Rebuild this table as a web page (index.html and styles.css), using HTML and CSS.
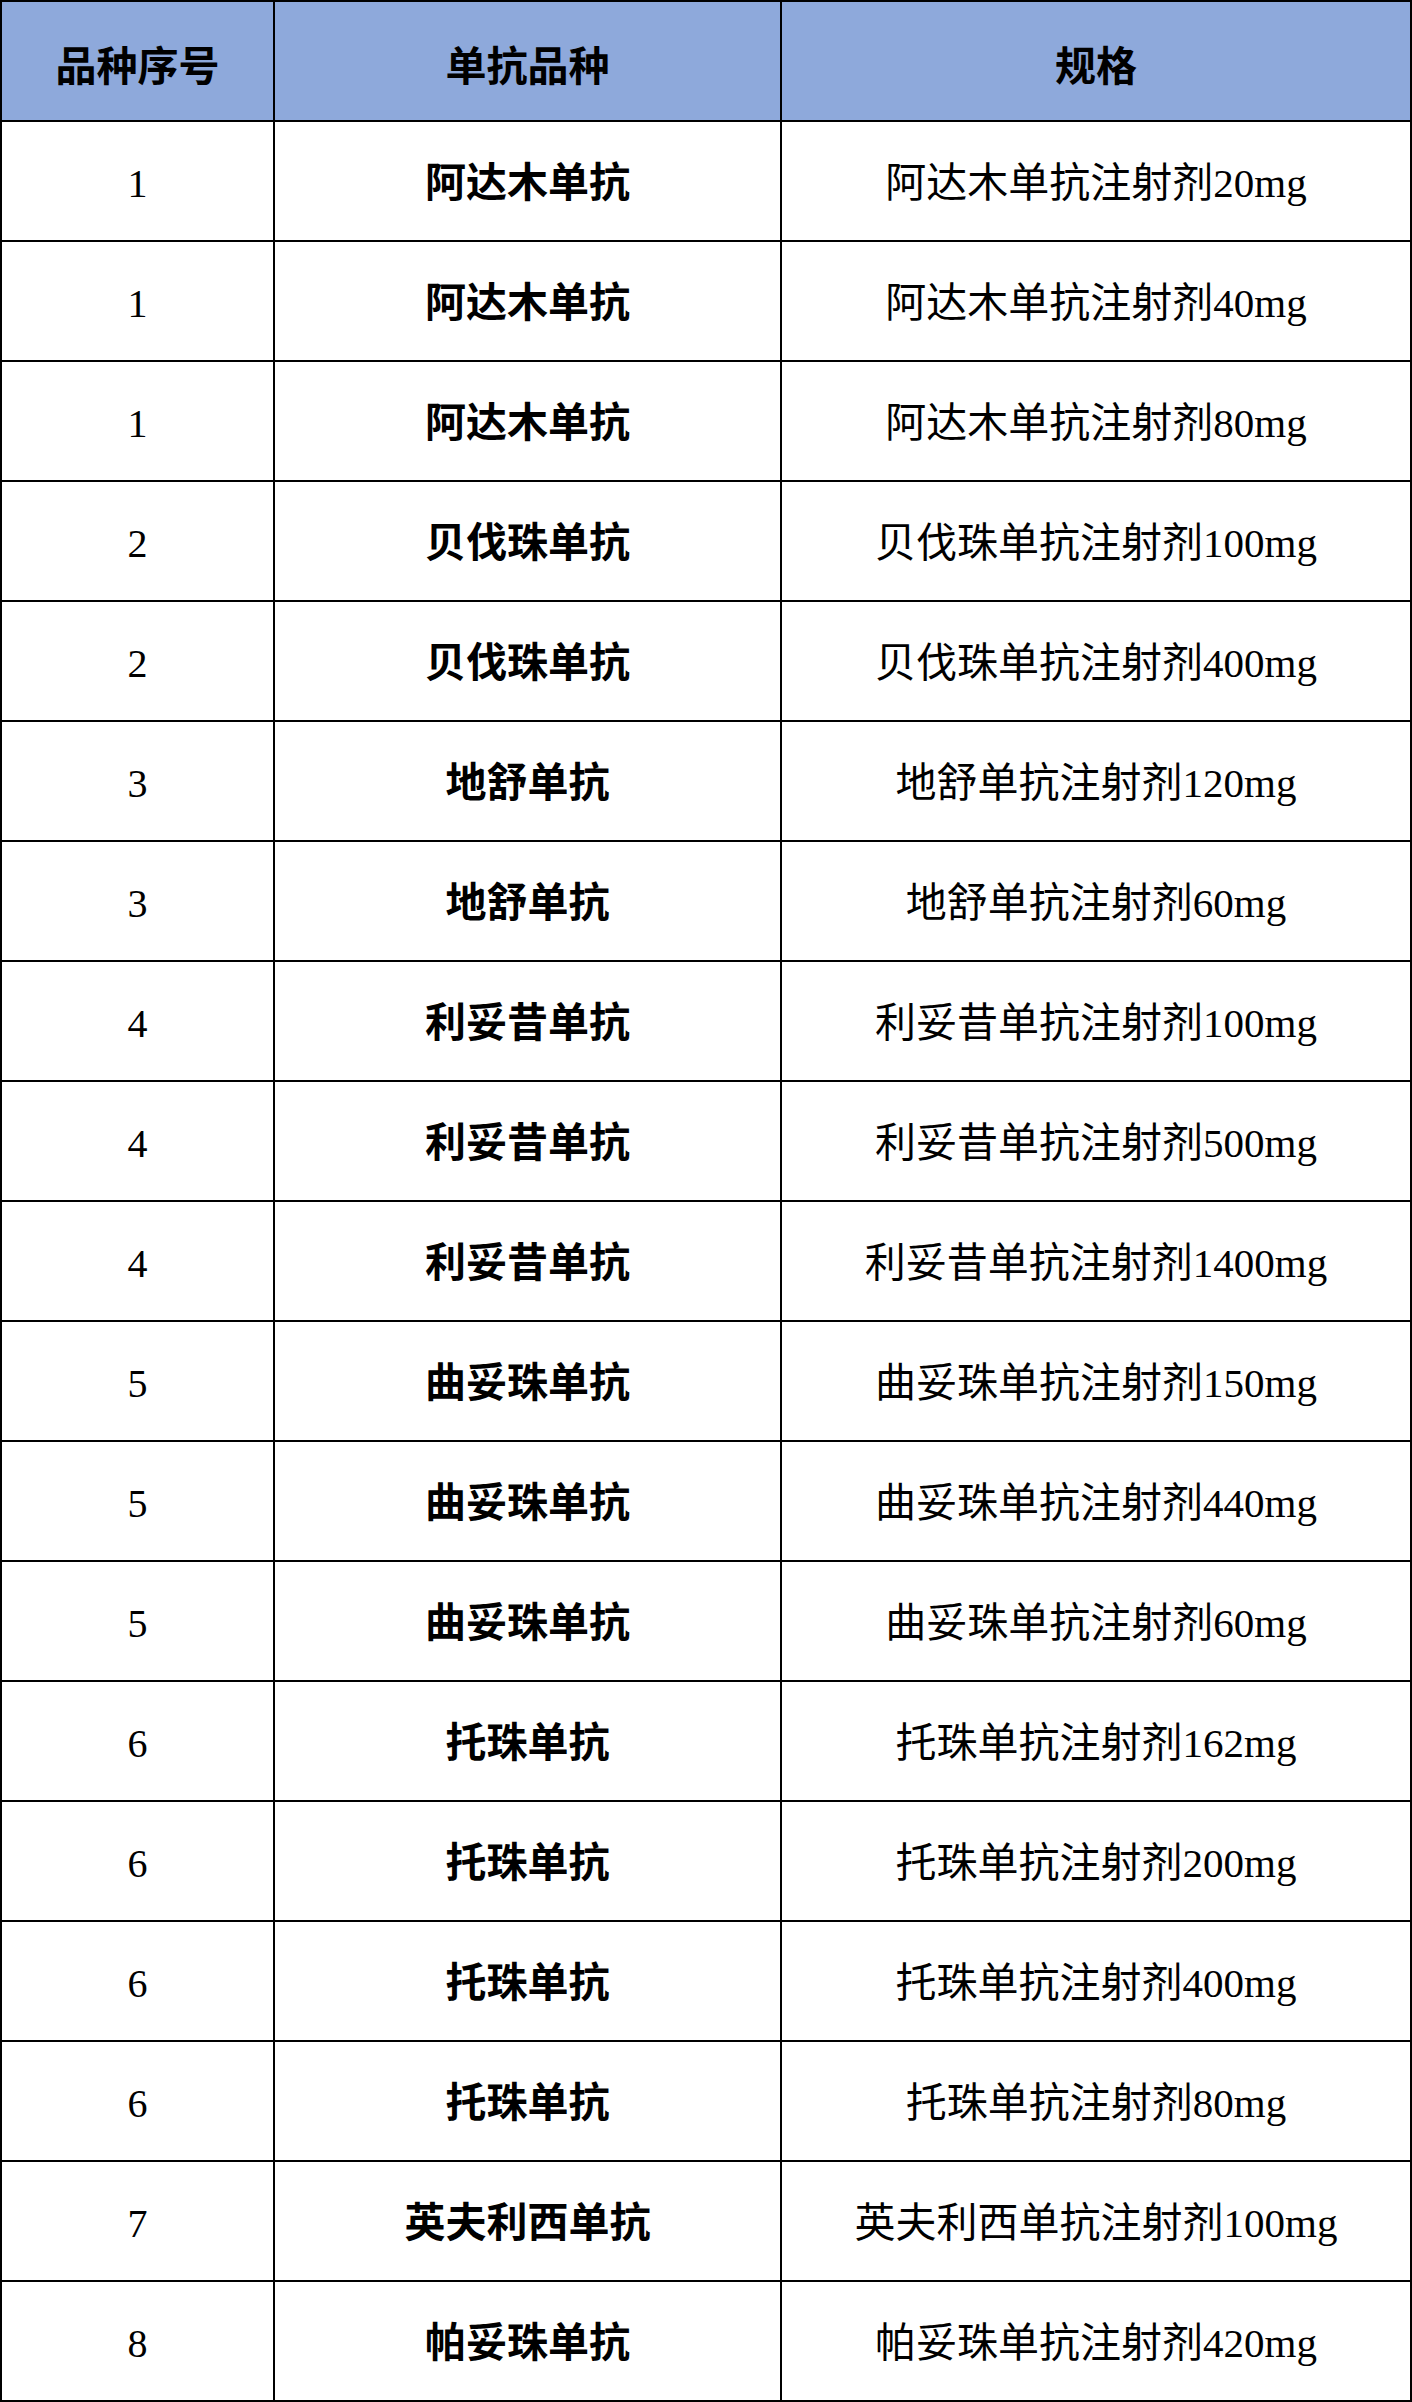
FILE: index.html
```html
<!DOCTYPE html>
<html lang="zh-CN">
<head>
<meta charset="utf-8">
<title>单抗品种规格</title>
<link rel="stylesheet" href="styles.css">
</head>
<body>
<table class="spec-table">
  <colgroup>
    <col class="col-no">
    <col class="col-name">
    <col class="col-spec">
  </colgroup>
  <thead>
    <tr><th>品种序号</th><th>单抗品种</th><th>规格</th></tr>
  </thead>
  <tbody>
    <tr><td class="num">1</td><td class="name">阿达木单抗</td><td class="spec">阿达木单抗注射剂<span class="lat">20mg</span></td></tr>
    <tr><td class="num">1</td><td class="name">阿达木单抗</td><td class="spec">阿达木单抗注射剂<span class="lat">40mg</span></td></tr>
    <tr><td class="num">1</td><td class="name">阿达木单抗</td><td class="spec">阿达木单抗注射剂<span class="lat">80mg</span></td></tr>
    <tr><td class="num">2</td><td class="name">贝伐珠单抗</td><td class="spec">贝伐珠单抗注射剂<span class="lat">100mg</span></td></tr>
    <tr><td class="num">2</td><td class="name">贝伐珠单抗</td><td class="spec">贝伐珠单抗注射剂<span class="lat">400mg</span></td></tr>
    <tr><td class="num">3</td><td class="name">地舒单抗</td><td class="spec">地舒单抗注射剂<span class="lat">120mg</span></td></tr>
    <tr><td class="num">3</td><td class="name">地舒单抗</td><td class="spec">地舒单抗注射剂<span class="lat">60mg</span></td></tr>
    <tr><td class="num">4</td><td class="name">利妥昔单抗</td><td class="spec">利妥昔单抗注射剂<span class="lat">100mg</span></td></tr>
    <tr><td class="num">4</td><td class="name">利妥昔单抗</td><td class="spec">利妥昔单抗注射剂<span class="lat">500mg</span></td></tr>
    <tr><td class="num">4</td><td class="name">利妥昔单抗</td><td class="spec">利妥昔单抗注射剂<span class="lat">1400mg</span></td></tr>
    <tr><td class="num">5</td><td class="name">曲妥珠单抗</td><td class="spec">曲妥珠单抗注射剂<span class="lat">150mg</span></td></tr>
    <tr><td class="num">5</td><td class="name">曲妥珠单抗</td><td class="spec">曲妥珠单抗注射剂<span class="lat">440mg</span></td></tr>
    <tr><td class="num">5</td><td class="name">曲妥珠单抗</td><td class="spec">曲妥珠单抗注射剂<span class="lat">60mg</span></td></tr>
    <tr><td class="num">6</td><td class="name">托珠单抗</td><td class="spec">托珠单抗注射剂<span class="lat">162mg</span></td></tr>
    <tr><td class="num">6</td><td class="name">托珠单抗</td><td class="spec">托珠单抗注射剂<span class="lat">200mg</span></td></tr>
    <tr><td class="num">6</td><td class="name">托珠单抗</td><td class="spec">托珠单抗注射剂<span class="lat">400mg</span></td></tr>
    <tr><td class="num">6</td><td class="name">托珠单抗</td><td class="spec">托珠单抗注射剂<span class="lat">80mg</span></td></tr>
    <tr><td class="num">7</td><td class="name">英夫利西单抗</td><td class="spec">英夫利西单抗注射剂<span class="lat">100mg</span></td></tr>
    <tr><td class="num">8</td><td class="name">帕妥珠单抗</td><td class="spec">帕妥珠单抗注射剂<span class="lat">420mg</span></td></tr>
  </tbody>
</table>
</body>
</html>
```
FILE: styles.css
```css
html, body {
  margin: 0;
  padding: 0;
  background: #ffffff;
}

.spec-table {
  width: 1412px;
  border-collapse: collapse;
  table-layout: fixed;
  font-family: "Liberation Serif", "Noto Sans CJK SC", serif;
  color: #000000;
  font-size: 41px;
}

.col-no { width: 273px; }
.col-name { width: 507px; }
.col-spec { width: 630px; }

.spec-table th,
.spec-table td {
  border: 2px solid #000000;
  text-align: center;
  vertical-align: middle;
  padding: 6px 0 0 0;
  line-height: 1.2;
  white-space: nowrap;
}

.spec-table tr {
  height: 120px;
}

.spec-table th {
  background: #8ea9db;
  font-family: "Noto Sans CJK SC", sans-serif;
  font-weight: 700;
  font-size: 41px;
}

.spec-table td.num {
  font-family: "Liberation Serif", serif;
  font-weight: 400;
  font-size: 40px;
}

.spec-table td.name {
  font-family: "Liberation Serif", "Noto Sans CJK SC", serif;
  font-weight: 700;
}

.spec-table td.spec {
  font-family: "Liberation Serif", "Noto Sans CJK SC", serif;
  font-weight: 400;
}

.lat {
  font-family: "Liberation Serif", serif;
}
```
